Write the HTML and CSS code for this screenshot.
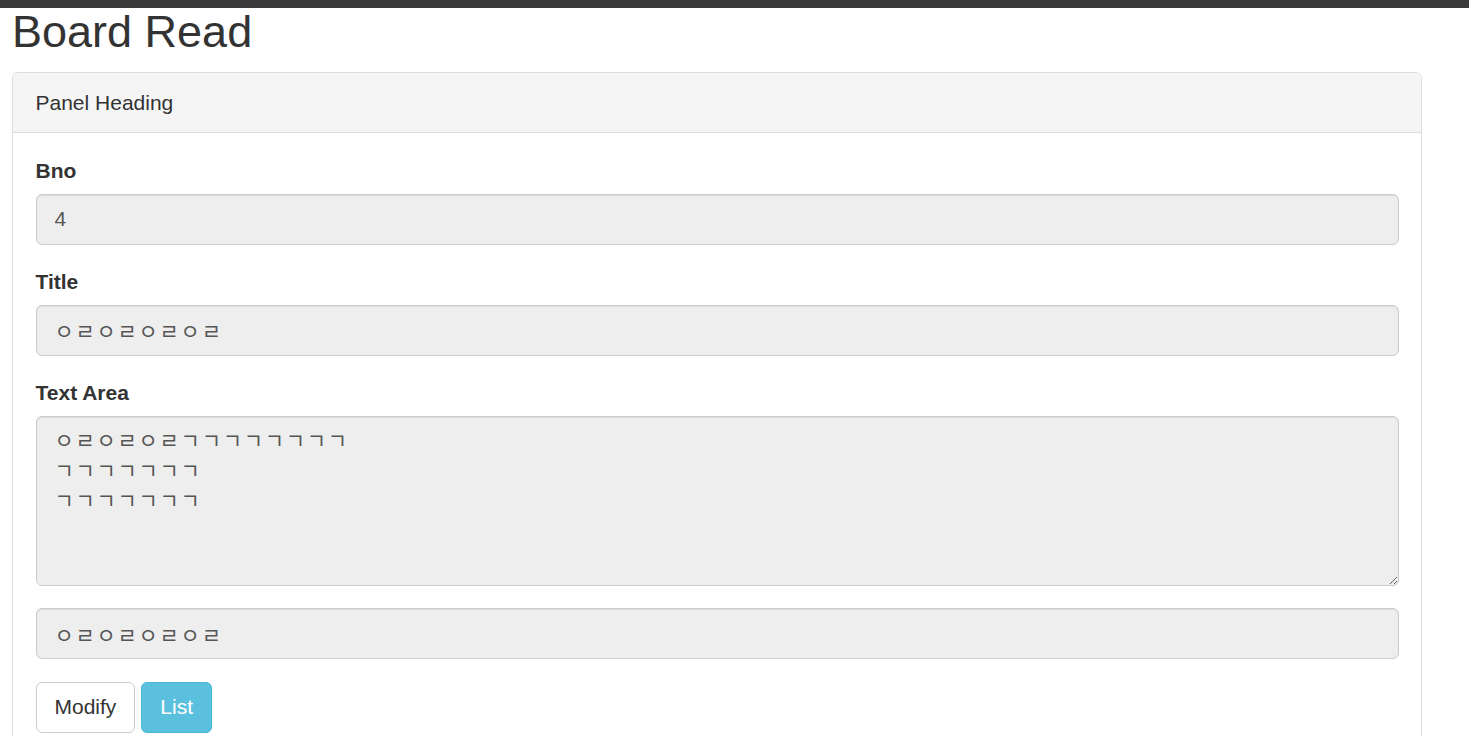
FILE: index.html
```html
<!DOCTYPE html>
<html lang="ko">
<head>
<meta charset="utf-8">
<title>Board Read</title>
<link rel="stylesheet" href="styles.css">
</head>
<body>
<div class="topbar"></div>
<div class="container">
  <h1 class="page-title">Board Read</h1>
  <div class="panel">
    <div class="panel-heading">Panel Heading</div>
    <div class="panel-body">
      <div class="form-group">
        <label class="form-label">Bno</label>
        <input class="form-control" type="text" value="4" readonly>
      </div>
      <div class="form-group">
        <label class="form-label">Title</label>
        <input class="form-control" type="text" value="ㅇㄹㅇㄹㅇㄹㅇㄹ" readonly>
      </div>
      <div class="form-group">
        <label class="form-label">Text Area</label>
        <textarea class="form-control form-textarea" rows="5" readonly>ㅇㄹㅇㄹㅇㄹㄱㄱㄱㄱㄱㄱㄱㄱ
ㄱㄱㄱㄱㄱㄱㄱ
ㄱㄱㄱㄱㄱㄱㄱ</textarea>
      </div>
      <div class="form-group">
        <input class="form-control" type="text" value="ㅇㄹㅇㄹㅇㄹㅇㄹ" readonly>
      </div>
      <div class="actions">
        <button class="btn btn-default" type="button">Modify</button>
        <button class="btn btn-info" type="button">List</button>
      </div>
    </div>
  </div>
</div>
</body>
</html>
```

FILE: styles.css
```css
html, body {
  margin: 0;
  padding: 0;
  background: #fff;
}
body {
  font-family: "Liberation Sans", Arial, "Noto Sans CJK KR", sans-serif;
  font-size: 21px;
  line-height: 30px;
  color: #333;
}
.topbar {
  height: 8px;
  background: #3a3a3a;
}
.container {
  padding: 0 12px;
}
.page-title {
  margin: -1px 0 15.5px 0;
  font-size: 45px;
  font-weight: 400;
  line-height: 49.5px;
  color: #333;
}
.panel {
  width: 1408px;
  border: 1px solid #ddd;
  border-radius: 6px;
  background: #fff;
}
.panel-heading {
  padding: 14.5px 22.5px;
  background: #f5f5f5;
  border-bottom: 1px solid #ddd;
  border-radius: 5px 5px 0 0;
}
.panel-body {
  padding: 23px 22.5px 22.5px;
}
.form-group {
  margin-bottom: 22.5px;
}
.form-label {
  display: block;
  font-weight: 700;
  margin-bottom: 7.5px;
}
.form-control {
  display: block;
  box-sizing: border-box;
  width: 100%;
  height: 51px;
  margin: 0;
  padding: 9px 18px;
  font-family: "Liberation Sans", Arial, "Noto Sans CJK KR", sans-serif;
  font-size: 21px;
  line-height: 30px;
  letter-spacing: 1.7px;
  color: #555;
  background: #eee;
  border: 1px solid #ccc;
  border-radius: 6px;
  box-shadow: inset 0 1px 1px rgba(0,0,0,.075);
  outline: none;
}
.form-textarea {
  height: 170px;
  resize: vertical;
}
.actions {
  display: flex;
  gap: 6px;
}
.btn {
  box-sizing: border-box;
  height: 51px;
  padding: 0 18px;
  font-family: "Liberation Sans", Arial, sans-serif;
  font-size: 21px;
  line-height: 30px;
  border: 1px solid transparent;
  border-radius: 6px;
  cursor: pointer;
}
.btn-default {
  color: #333;
  background: #fff;
  border-color: #ccc;
}
.btn-info {
  color: #fff;
  background: #5bc0de;
  border-color: #46b8da;
}
```
